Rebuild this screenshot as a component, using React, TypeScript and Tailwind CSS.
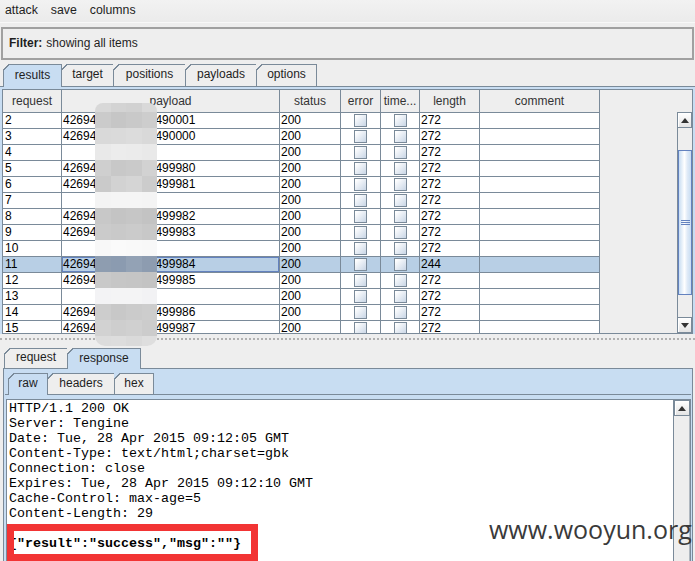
import React from "react";
import clsx from "clsx";

type Row = { n: string; suffix?: string; len: string; sel?: boolean };

const rows: Row[] = [
  { n: "2", suffix: "490001", len: "272" },
  { n: "3", suffix: "490000", len: "272" },
  { n: "4", len: "272" },
  { n: "5", suffix: "499980", len: "272" },
  { n: "6", suffix: "499981", len: "272" },
  { n: "7", len: "272" },
  { n: "8", suffix: "499982", len: "272" },
  { n: "9", suffix: "499983", len: "272" },
  { n: "10", len: "272" },
  { n: "11", suffix: "499984", len: "244", sel: true },
  { n: "12", suffix: "499985", len: "272" },
  { n: "13", len: "272" },
  { n: "14", suffix: "499986", len: "272" },
  { n: "15", suffix: "499987", len: "272" },
];

const mosaic: { h: string; c: string[] }[] = [
  { h: "h-[9px]", c: ["bg-[#d8d8d8]", "bg-[#d3d3d3]", "bg-[#d1d1d1]", "bg-[#d9d9d9]"] },
  { h: "h-[16px]", c: ["bg-[#cbcbcb]", "bg-[#c6c6c6]", "bg-[#c9c9c9]", "bg-[#cdcdcd]"] },
  { h: "h-[16px]", c: ["bg-[#d9d9d9]", "bg-[#dadada]", "bg-[#dcdcdc]", "bg-[#d9d9d9]"] },
  { h: "h-[16px]", c: ["bg-[#e9e9e9]", "bg-[#ececec]", "bg-[#ebebeb]", "bg-[#e9e9e9]"] },
  { h: "h-[16px]", c: ["bg-[#cfcfcf]", "bg-[#c8c8c8]", "bg-[#cacaca]", "bg-[#d2d2d2]"] },
  { h: "h-[16px]", c: ["bg-[#cacaca]", "bg-[#d2d2d2]", "bg-[#d5d5d5]", "bg-[#cccccc]"] },
  { h: "h-[16px]", c: ["bg-[#f4f4f4]", "bg-[#f5f5f5]", "bg-[#f5f5f5]", "bg-[#f4f4f4]"] },
  { h: "h-[16px]", c: ["bg-[#c8c8c8]", "bg-[#c4c4c4]", "bg-[#c6c6c6]", "bg-[#c3c3c3]"] },
  { h: "h-[16px]", c: ["bg-[#cbcbcb]", "bg-[#c9c9c9]", "bg-[#cbcbcb]", "bg-[#c8c8c8]"] },
  { h: "h-[16px]", c: ["bg-[#f8f8f8]", "bg-[#fafafa]", "bg-[#f9f9f9]", "bg-[#f8f8f8]"] },
  { h: "h-[16px]", c: ["bg-[#8e9db0]", "bg-[#8b9bb0]", "bg-[#93a2b5]", "bg-[#8d9cb0]"] },
  { h: "h-[16px]", c: ["bg-[#c9c9c9]", "bg-[#c6c6c6]", "bg-[#c5c5c5]", "bg-[#c3c3c3]"] },
  { h: "h-[16px]", c: ["bg-[#f3f3f5]", "bg-[#f4f4f5]", "bg-[#f4f4f5]", "bg-[#f2f2f4]"] },
  { h: "h-[16px]", c: ["bg-[#cdcdcd]", "bg-[#c8c8c8]", "bg-[#cbcbcb]", "bg-[#cdcdcd]"] },
  { h: "h-[16px]", c: ["bg-[#d2d2d2]", "bg-[#cecece]", "bg-[#d0d0d0]", "bg-[#cccccc]"] },
  { h: "h-[10px]", c: ["bg-[#dcdcdc]", "bg-[#dddddd]", "bg-[#dadada]", "bg-[#dedede]"] },
];

function Tab({
  label,
  w,
  selected,
  h,
  corner,
}: {
  label: string;
  w: string;
  selected?: boolean;
  h: string;
  corner: string;
}) {
  return (
    <div
      className={clsx(
        "relative -ml-px first:ml-0 flex items-center justify-center border border-b-0 border-[#7a8a99] text-[#1e1e1e] pb-[3px] shrink-0",
        w,
        h,
        selected ? "bg-[#c8ddf2] z-10" : "bg-[#eeeeee]"
      )}
    >
      <span className={clsx("absolute -left-px -top-px w-[6px] h-[6px]", corner)} />
      {label}
    </div>
  );
}

function Checkbox() {
  return (
    <div className="w-[13px] h-[13px] mt-px border border-[#7a8a99] bg-[linear-gradient(135deg,#ffffff_10%,#c9d6e6_100%)]" />
  );
}

function Arrow({ up }: { up?: boolean }) {
  return (
    <svg width="8" height="5" viewBox="0 0 8 5">
      {up ? <polygon points="0,5 8,5 4,0" fill="#333" /> : <polygon points="0,0 8,0 4,5" fill="#333" />}
    </svg>
  );
}

function ScrollButton({ up }: { up?: boolean }) {
  return (
    <div className="h-[16px] shrink-0 flex items-center justify-center border border-[#7a8a99] bg-[linear-gradient(to_bottom,#ffffff,#e4e4e4)] shadow-[inset_1px_1px_0_#ffffff]">
      <Arrow up={up} />
    </div>
  );
}

export default function App() {
  const cornerGray = "bg-[linear-gradient(135deg,#eeeeee_46%,#7a8a99_46%,#7a8a99_64%,transparent_64%)]";
  const cornerBlue = "bg-[linear-gradient(135deg,#c8ddf2_46%,#7a8a99_46%,#7a8a99_64%,transparent_64%)]";
  const cell = "border-r border-[#7a8a99] h-full shrink-0 overflow-hidden whitespace-nowrap leading-[12px]";
  return (
    <div className="relative w-[695px] h-[561px] overflow-hidden bg-[#eeeeee] font-['Liberation_Sans',Arial,sans-serif] text-[12px] text-black">
      {/* menu bar */}
      <div className="h-[23px] flex items-center gap-[13px] pl-[5px] pb-px bg-[linear-gradient(to_bottom,#f2f2f2,#ebebeb)] border-b border-[#f8f8f8] text-[#1e1e1e] text-[12.3px]">
        <span>attack</span>
        <span>save</span>
        <span>columns</span>
      </div>

      {/* filter */}
      <div className="mt-[4px] mx-px h-[33px] border-2 border-[#a0a0a0] flex items-center pl-[6px] pb-px text-[#1e1e1e]">
        <span className="font-bold">Filter:</span>
        <span className="ml-[4px]">showing all items</span>
      </div>

      {/* main tabs */}
      <div className="mt-[4px] h-[22px] flex items-start pl-[3px]">
        <Tab label="results" w="w-[59px]" h="h-[23px]" selected corner={cornerGray} />
        <Tab label="target" w="w-[53px]" h="h-[22px]" corner={cornerGray} />
        <Tab label="positions" w="w-[73px]" h="h-[22px]" corner={cornerGray} />
        <Tab label="payloads" w="w-[72px]" h="h-[22px]" corner={cornerGray} />
        <Tab label="options" w="w-[61px]" h="h-[22px]" corner={cornerGray} />
      </div>

      {/* results panel */}
      <div className="border-t border-[#7a8a99] bg-[#c8ddf2] pt-[2px] pl-[2px] pr-[2px]">
        <div className="h-[245px] border border-[#7a8a99] bg-[#eeeeee] flex overflow-hidden">
          <div className="flex flex-col w-[597px] shrink-0">
            {/* header */}
            <div className="h-[23px] shrink-0 flex border-b border-[#7a8a99] text-[#333]">
              {[
                ["request", "w-[59px]"],
                ["payload", "w-[218px]"],
                ["status", "w-[61px]"],
                ["error", "w-[40px]"],
                ["time...", "w-[39px]"],
                ["length", "w-[60px]"],
                ["comment", "w-[120px]"],
              ].map(([t, w]) => (
                <div key={t} className={clsx("h-full flex items-center justify-center border-r border-[#7a8a99] bg-[#eeeeee] shrink-0", w)}>
                  {t}
                </div>
              ))}
            </div>
            {/* rows */}
            {rows.map((r) => (
              <div
                key={r.n}
                className={clsx("h-[16px] shrink-0 flex border-b border-[#7a8a99]", r.sel ? "bg-[#b8cfe5]" : "bg-white")}
              >
                <div className={clsx(cell, "w-[59px] pl-[2px] pt-px")}>{r.n}</div>
                <div className={clsx(cell, "w-[218px] pl-px pt-px", r.sel && "shadow-[inset_0_0_0_1px_#6382bf]")}>
                  {r.suffix && (
                    <>
                      <span>42694</span>
                      <span className="inline-block w-[59px]" />
                      <span>{r.suffix}</span>
                    </>
                  )}
                </div>
                <div className={clsx(cell, "w-[61px] pl-px pt-px")}>200</div>
                <div className={clsx(cell, "w-[40px] flex justify-center")}>
                  <Checkbox />
                </div>
                <div className={clsx(cell, "w-[39px] flex justify-center")}>
                  <Checkbox />
                </div>
                <div className={clsx(cell, "w-[60px] pl-px pt-px")}>{r.len}</div>
                <div className={clsx(cell, "w-[120px]")} />
              </div>
            ))}
          </div>
          <div className="flex-1" />
          {/* scrollbar */}
          <div className="w-[15px] shrink-0 flex flex-col">
            <div className="h-[22px] shrink-0" />
            <ScrollButton up />
            <div className="flex-1 flex flex-col border-l border-[#7a8a99] bg-[#eeeeee]">
              <div className="h-[22px] shrink-0" />
              <div className="h-[145px] shrink-0 border border-[#6382bf] bg-[linear-gradient(to_right,#c8ddf2,#ffffff_45%,#dfeaf7_70%,#c8ddf2)] flex flex-col items-center justify-center gap-px">
                <div className="h-px w-[9px] bg-[#6382bf]" />
                <div className="h-px w-[9px] bg-[#6382bf]" />
                <div className="h-px w-[9px] bg-[#6382bf]" />
              </div>
              <div className="flex-1" />
            </div>
            <ScrollButton />
          </div>
        </div>
      </div>

      {/* splitter */}
      <div className="h-[14px] pt-[4px]">
        <div className="h-[3px] border-t-2 border-dotted border-[#b0b0b0]" />
      </div>

      {/* lower tabs */}
      <div className="h-[20px] flex items-start pl-[4px]">
        <Tab label="request" w="w-[64px]" h="h-[20px]" corner={cornerGray} />
        <Tab label="response" w="w-[74px]" h="h-[21px]" selected corner={cornerGray} />
      </div>

      {/* lower panel */}
      <div className="ml-[3px] mr-[2px] h-[193px] border border-b-0 border-[#7a8a99] bg-[#c8ddf2] pt-[4px] px-[1px]">
        <div className="h-[21px] flex items-start pl-[3px]">
          <Tab label="raw" w="w-[40px]" h="h-[22px]" selected corner={cornerBlue} />
          <Tab label="headers" w="w-[68px]" h="h-[21px]" corner={cornerBlue} />
          <Tab label="hex" w="w-[40px]" h="h-[21px]" corner={cornerBlue} />
        </div>
        <div className="border-t border-[#7a8a99] pt-[4px] h-[170px]">
          <div className="ml-px h-full border border-b-0 border-[#7a8a99] flex bg-white">
            <div className="flex-1 pl-[2px] pt-px font-['Liberation_Mono','Courier_New',monospace] text-[13.33px] leading-[15px] whitespace-pre text-black">
              <div>HTTP/1.1 200 OK</div>
              <div>Server: Tengine</div>
              <div>Date: Tue, 28 Apr 2015 09:12:05 GMT</div>
              <div>Content-Type: text/html;charset=gbk</div>
              <div>Connection: close</div>
              <div>Expires: Tue, 28 Apr 2015 09:12:10 GMT</div>
              <div>Cache-Control: max-age=5</div>
              <div>Content-Length: 29</div>
              <div> </div>
              <div className="font-bold">{'{"result":"success","msg":""}'}</div>
            </div>
            <div className="w-[17px] shrink-0 flex flex-col border-l border-[#7a8a99] bg-[#eeeeee]">
              <ScrollButton up />
              <div className="flex-1 border-r border-[#b0b8c0]" />
            </div>
          </div>
        </div>
      </div>

      {/* mosaic overlay */}
      <div className="absolute left-[95px] top-[103px] w-[62px] rounded-t-[8px] rounded-b-[10px] overflow-hidden flex flex-col">
        {mosaic.map((m, i) => (
          <div key={i} className={clsx("grid grid-cols-4", m.h)}>
            {m.c.map((c, j) => (
              <div key={j} className={c} />
            ))}
          </div>
        ))}
      </div>

      {/* red annotation box */}
      <div className="absolute left-[7px] top-[524px] w-[251px] h-[37px] border-[7px] border-[#f23434]" />

      {/* watermark */}
      <div className="absolute left-[489px] top-[512px] font-['Open_Sans',sans-serif] text-[25px] text-[#3a3a3a] leading-[34px]">
        www.wooyun.org
      </div>
    </div>
  );
}
